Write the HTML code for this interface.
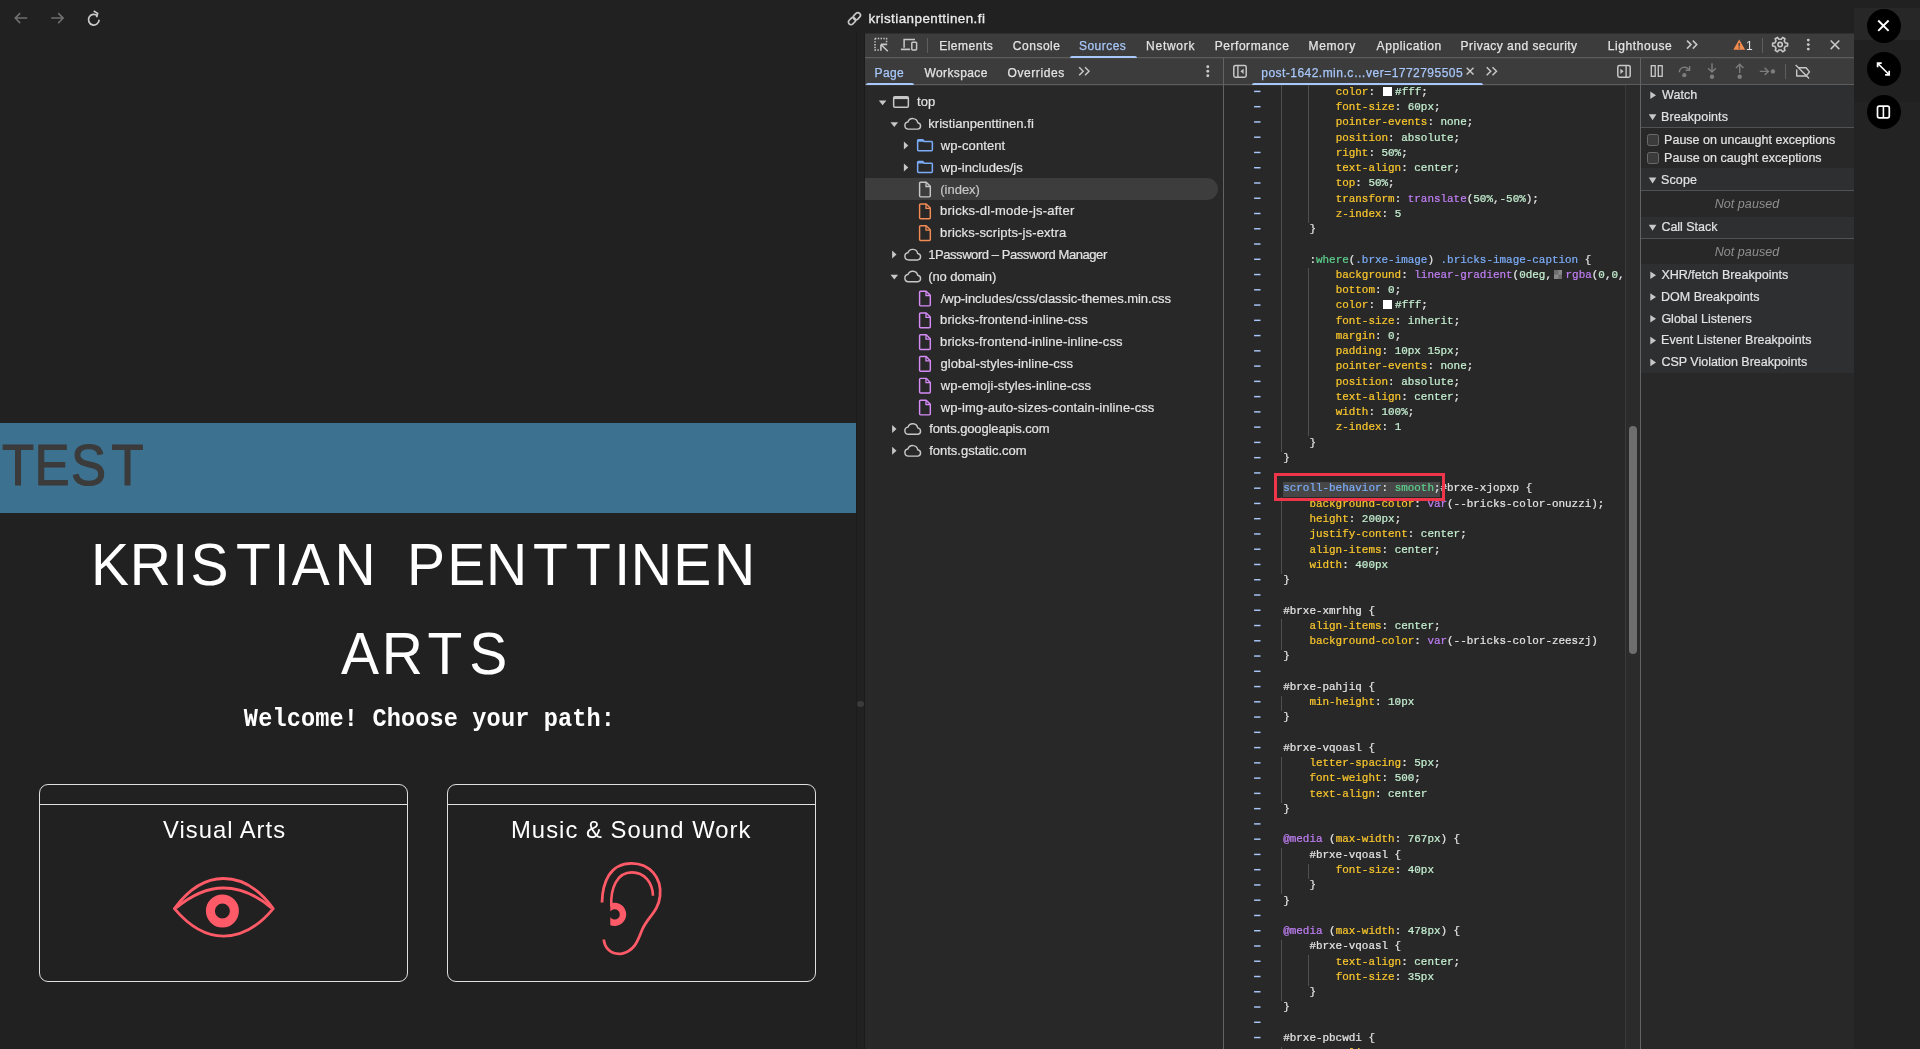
<!DOCTYPE html>
<html lang="en"><head><meta charset="utf-8"><title>kristianpenttinen.fi</title>
<style>
html,body{margin:0;padding:0}
body{width:1920px;height:1049px;overflow:hidden;background:#212121;position:relative;font-family:"Liberation Sans", sans-serif;color:#e3e3e3}
.a{position:absolute}
.t{position:absolute;white-space:pre;line-height:1}
.lyr{will-change:opacity}
.u{font-family:"Liberation Sans", sans-serif}
.m{font-family:"Liberation Mono", monospace}
.cl{position:absolute;left:1283.20px;height:15.26px;line-height:15.26px;font:10.93px/15.26px "Liberation Mono", monospace;white-space:pre;color:#e3e3e3;-webkit-text-stroke:0.22px currentColor}
.cl span{-webkit-text-stroke:0.22px currentColor}
.sw{display:inline-block;width:8.8px;height:8.8px;margin:0 3.1px 0 1.7px;vertical-align:-0.8px;box-sizing:border-box}
.chk{background:#6d6d6d;background-image:linear-gradient(45deg,#8a8a8a 25%,transparent 25%,transparent 75%,#8a8a8a 75%),linear-gradient(45deg,#8a8a8a 25%,transparent 25%,transparent 75%,#8a8a8a 75%);background-size:8.8px 8.8px;background-position:0 0,4.4px 4.4px}
.g{position:absolute;width:1px;background:#505050}
.hd{position:absolute;left:1641px;width:213px;background:#2e2f31}
.hb{position:absolute;left:1641px;width:213px;height:1px;background:#525252}
svg{position:absolute;overflow:visible}
</style></head><body>
<!-- browser chrome strip -->
<div class="a" style="left:856px;top:33px;width:9px;height:1016px;background:#212121;border-left:1px solid #1c1c1c;border-right:1px solid #1b1b1b;box-sizing:border-box"></div>
<div class="a" style="left:857.1px;top:700.7px;width:6.6px;height:6.6px;border-radius:50%;background:#3a3a3a"></div>
<div class="a" style="left:1854px;top:0;width:66px;height:1049px;background:#232323"></div>
<div class="a" style="left:1854px;top:0;width:66px;height:8px;background:#212121"></div>
<div class="a" style="left:1854px;top:8px;width:66px;height:32px;background:#272727"></div>
<div class="a" style="left:1854px;top:40px;width:66px;height:62px;background:#202020"></div>
<!-- page -->
<div class="a" style="left:0;top:423px;width:855.5px;height:89.7px;background:#3d7190"></div>
<div class="a" style="left:39.4px;top:783.7px;width:368.7px;height:198px;box-sizing:border-box;border:1.2px solid #e0e0e0;border-radius:9px"></div>
<div class="a" style="left:40.0px;top:804px;width:367.5px;height:1.2px;background:#e0e0e0"></div>
<div class="a" style="left:447.2px;top:783.7px;width:368.7px;height:198px;box-sizing:border-box;border:1.2px solid #e0e0e0;border-radius:9px"></div>
<div class="a" style="left:447.8px;top:804px;width:367.5px;height:1.2px;background:#e0e0e0"></div>
<!-- devtools -->
<div class="a" style="left:865px;top:34px;width:989px;height:1015px;background:#282828"></div>
<div class="a" style="left:865px;top:33px;width:989px;height:1px;background:#2f2f2f"></div>
<div class="a" style="left:865px;top:34px;width:989px;height:51px;background:#3c3c3c"></div>
<div class="a" style="left:865px;top:57px;width:989px;height:1px;background:#5c5c5c"></div>
<div class="a" style="left:865px;top:58px;width:989px;height:1px;background:#444"></div>
<div class="a" style="left:865px;top:84px;width:989px;height:1px;background:#5c5c5c"></div>
<div class="a" style="left:865px;top:85px;width:989px;height:1px;background:#343434"></div>
<div class="a" style="left:1223px;top:58px;width:1px;height:991px;background:#636363"></div>
<div class="a" style="left:1640px;top:58px;width:1px;height:991px;background:#636363"></div>
<div class="a" style="left:1070px;top:55.6px;width:66.6px;height:2.9px;background:#a8c7fa;border-radius:2.5px 2.5px 0 0"></div>
<div class="a" style="left:865.6px;top:82.7px;width:48.3px;height:2.7px;background:#a8c7fa;border-radius:2.5px 2.5px 0 0"></div>
<div class="a" style="left:1252px;top:82.7px;width:230.5px;height:2.7px;background:#a8c7fa;border-radius:2.5px 2.5px 0 0"></div>
<div class="a" style="left:927px;top:38px;width:1px;height:15px;background:#5e5e5e"></div>
<div class="a" style="left:1761.5px;top:38px;width:1px;height:15px;background:#5e5e5e"></div>
<div class="a" style="left:1785.4px;top:64px;width:1px;height:15px;background:#5e5e5e"></div>
<div class="a" style="left:865px;top:178.2px;width:353.4px;height:21.8px;background:#3d3d3d;border-radius:0 11px 11px 0"></div>
<div class="hd" style="top:85.0px;height:42.0px"></div>
<div class="hd" style="top:168.0px;height:22.0px"></div>
<div class="hd" style="top:217.0px;height:21.0px"></div>
<div class="hd" style="top:264.0px;height:109.0px"></div>
<div class="hb" style="top:127.0px"></div>
<div class="hb" style="top:190.0px"></div>
<div class="hb" style="top:238.0px"></div>
<div class="a" style="left:1646.8px;top:134.0px;width:12px;height:11.6px;box-sizing:border-box;border:1.2px solid #6a6a6a;border-radius:2.5px;background:#3b3b3b"></div>
<div class="a" style="left:1646.8px;top:152.0px;width:12px;height:11.6px;box-sizing:border-box;border:1.2px solid #6a6a6a;border-radius:2.5px;background:#3b3b3b"></div>
<div class="a" style="left:1625px;top:85.3px;width:15.2px;height:964px;background:#2b2b2b;border-left:1px solid #3a3a3a;box-sizing:border-box"></div>
<div class="a" style="left:1629px;top:425.8px;width:8px;height:228.4px;background:#6e6e6e;border-radius:4.2px"></div>
<!-- code -->
<div class="lyr">
<svg style="left:1254px;top:0" width="7" height="1049" viewBox="0 0 7 1049"><rect x="0.1" y="90.70" width="6.4" height="1.45" fill="#a8c7fa"/><rect x="0.1" y="105.96" width="6.4" height="1.45" fill="#a8c7fa"/><rect x="0.1" y="121.22" width="6.4" height="1.45" fill="#a8c7fa"/><rect x="0.1" y="136.48" width="6.4" height="1.45" fill="#a8c7fa"/><rect x="0.1" y="151.74" width="6.4" height="1.45" fill="#a8c7fa"/><rect x="0.1" y="167.00" width="6.4" height="1.45" fill="#a8c7fa"/><rect x="0.1" y="182.26" width="6.4" height="1.45" fill="#a8c7fa"/><rect x="0.1" y="197.52" width="6.4" height="1.45" fill="#a8c7fa"/><rect x="0.1" y="212.78" width="6.4" height="1.45" fill="#a8c7fa"/><rect x="0.1" y="228.04" width="6.4" height="1.45" fill="#a8c7fa"/><rect x="0.1" y="243.30" width="6.4" height="1.45" fill="#a8c7fa"/><rect x="0.1" y="258.56" width="6.4" height="1.45" fill="#a8c7fa"/><rect x="0.1" y="273.82" width="6.4" height="1.45" fill="#a8c7fa"/><rect x="0.1" y="289.08" width="6.4" height="1.45" fill="#a8c7fa"/><rect x="0.1" y="304.34" width="6.4" height="1.45" fill="#a8c7fa"/><rect x="0.1" y="319.60" width="6.4" height="1.45" fill="#a8c7fa"/><rect x="0.1" y="334.86" width="6.4" height="1.45" fill="#a8c7fa"/><rect x="0.1" y="350.12" width="6.4" height="1.45" fill="#a8c7fa"/><rect x="0.1" y="365.38" width="6.4" height="1.45" fill="#a8c7fa"/><rect x="0.1" y="380.64" width="6.4" height="1.45" fill="#a8c7fa"/><rect x="0.1" y="395.90" width="6.4" height="1.45" fill="#a8c7fa"/><rect x="0.1" y="411.16" width="6.4" height="1.45" fill="#a8c7fa"/><rect x="0.1" y="426.42" width="6.4" height="1.45" fill="#a8c7fa"/><rect x="0.1" y="441.68" width="6.4" height="1.45" fill="#a8c7fa"/><rect x="0.1" y="456.94" width="6.4" height="1.45" fill="#a8c7fa"/><rect x="0.1" y="472.20" width="6.4" height="1.45" fill="#a8c7fa"/><rect x="0.1" y="487.46" width="6.4" height="1.45" fill="#a8c7fa"/><rect x="0.1" y="502.72" width="6.4" height="1.45" fill="#a8c7fa"/><rect x="0.1" y="517.98" width="6.4" height="1.45" fill="#a8c7fa"/><rect x="0.1" y="533.24" width="6.4" height="1.45" fill="#a8c7fa"/><rect x="0.1" y="548.50" width="6.4" height="1.45" fill="#a8c7fa"/><rect x="0.1" y="563.76" width="6.4" height="1.45" fill="#a8c7fa"/><rect x="0.1" y="579.02" width="6.4" height="1.45" fill="#a8c7fa"/><rect x="0.1" y="594.28" width="6.4" height="1.45" fill="#a8c7fa"/><rect x="0.1" y="609.54" width="6.4" height="1.45" fill="#a8c7fa"/><rect x="0.1" y="624.80" width="6.4" height="1.45" fill="#a8c7fa"/><rect x="0.1" y="640.06" width="6.4" height="1.45" fill="#a8c7fa"/><rect x="0.1" y="655.32" width="6.4" height="1.45" fill="#a8c7fa"/><rect x="0.1" y="670.58" width="6.4" height="1.45" fill="#a8c7fa"/><rect x="0.1" y="685.84" width="6.4" height="1.45" fill="#a8c7fa"/><rect x="0.1" y="701.10" width="6.4" height="1.45" fill="#a8c7fa"/><rect x="0.1" y="716.36" width="6.4" height="1.45" fill="#a8c7fa"/><rect x="0.1" y="731.62" width="6.4" height="1.45" fill="#a8c7fa"/><rect x="0.1" y="746.88" width="6.4" height="1.45" fill="#a8c7fa"/><rect x="0.1" y="762.14" width="6.4" height="1.45" fill="#a8c7fa"/><rect x="0.1" y="777.40" width="6.4" height="1.45" fill="#a8c7fa"/><rect x="0.1" y="792.66" width="6.4" height="1.45" fill="#a8c7fa"/><rect x="0.1" y="807.92" width="6.4" height="1.45" fill="#a8c7fa"/><rect x="0.1" y="823.18" width="6.4" height="1.45" fill="#a8c7fa"/><rect x="0.1" y="838.44" width="6.4" height="1.45" fill="#a8c7fa"/><rect x="0.1" y="853.70" width="6.4" height="1.45" fill="#a8c7fa"/><rect x="0.1" y="868.96" width="6.4" height="1.45" fill="#a8c7fa"/><rect x="0.1" y="884.22" width="6.4" height="1.45" fill="#a8c7fa"/><rect x="0.1" y="899.48" width="6.4" height="1.45" fill="#a8c7fa"/><rect x="0.1" y="914.74" width="6.4" height="1.45" fill="#a8c7fa"/><rect x="0.1" y="930.00" width="6.4" height="1.45" fill="#a8c7fa"/><rect x="0.1" y="945.26" width="6.4" height="1.45" fill="#a8c7fa"/><rect x="0.1" y="960.52" width="6.4" height="1.45" fill="#a8c7fa"/><rect x="0.1" y="975.78" width="6.4" height="1.45" fill="#a8c7fa"/><rect x="0.1" y="991.04" width="6.4" height="1.45" fill="#a8c7fa"/><rect x="0.1" y="1006.30" width="6.4" height="1.45" fill="#a8c7fa"/><rect x="0.1" y="1021.56" width="6.4" height="1.45" fill="#a8c7fa"/><rect x="0.1" y="1036.82" width="6.4" height="1.45" fill="#a8c7fa"/><rect x="0.1" y="1052.08" width="6.4" height="1.45" fill="#a8c7fa"/></svg>
<div class="a" style="left:1282.6px;top:482.3px;width:157.3px;height:15px;background:#474747"></div>
<div class="g" style="left:1281.3px;top:85.33px;height:15.26px"></div><div class="g" style="left:1307.5px;top:85.33px;height:15.26px"></div><div class="cl" style="top:84.73px">        <span style="color:#f9c62c">color</span>: <i class="sw" style="background:#fff"></i><span style="color:#c4eed0">#fff</span>;</div>
<div class="g" style="left:1281.3px;top:100.59px;height:15.26px"></div><div class="g" style="left:1307.5px;top:100.59px;height:15.26px"></div><div class="cl" style="top:99.99px">        <span style="color:#f9c62c">font-size</span>: <span style="color:#c4eed0">60px</span>;</div>
<div class="g" style="left:1281.3px;top:115.85px;height:15.26px"></div><div class="g" style="left:1307.5px;top:115.85px;height:15.26px"></div><div class="cl" style="top:115.25px">        <span style="color:#f9c62c">pointer-events</span>: <span style="color:#c4eed0">none</span>;</div>
<div class="g" style="left:1281.3px;top:131.11px;height:15.26px"></div><div class="g" style="left:1307.5px;top:131.11px;height:15.26px"></div><div class="cl" style="top:130.51px">        <span style="color:#f9c62c">position</span>: <span style="color:#c4eed0">absolute</span>;</div>
<div class="g" style="left:1281.3px;top:146.37px;height:15.26px"></div><div class="g" style="left:1307.5px;top:146.37px;height:15.26px"></div><div class="cl" style="top:145.77px">        <span style="color:#f9c62c">right</span>: <span style="color:#c4eed0">50%</span>;</div>
<div class="g" style="left:1281.3px;top:161.63px;height:15.26px"></div><div class="g" style="left:1307.5px;top:161.63px;height:15.26px"></div><div class="cl" style="top:161.03px">        <span style="color:#f9c62c">text-align</span>: <span style="color:#c4eed0">center</span>;</div>
<div class="g" style="left:1281.3px;top:176.89px;height:15.26px"></div><div class="g" style="left:1307.5px;top:176.89px;height:15.26px"></div><div class="cl" style="top:176.29px">        <span style="color:#f9c62c">top</span>: <span style="color:#c4eed0">50%</span>;</div>
<div class="g" style="left:1281.3px;top:192.15px;height:15.26px"></div><div class="g" style="left:1307.5px;top:192.15px;height:15.26px"></div><div class="cl" style="top:191.55px">        <span style="color:#f9c62c">transform</span>: <span style="color:#c07ff5">translate</span>(<span style="color:#c4eed0">50%</span>,<span style="color:#c4eed0">-50%</span>);</div>
<div class="g" style="left:1281.3px;top:207.41px;height:15.26px"></div><div class="g" style="left:1307.5px;top:207.41px;height:15.26px"></div><div class="cl" style="top:206.81px">        <span style="color:#f9c62c">z-index</span>: <span style="color:#c4eed0">5</span></div>
<div class="g" style="left:1281.3px;top:222.67px;height:15.26px"></div><div class="cl" style="top:222.07px">    }</div>
<div class="g" style="left:1281.3px;top:237.93px;height:15.26px"></div>
<div class="g" style="left:1281.3px;top:253.19px;height:15.26px"></div><div class="cl" style="top:252.59px">    :<span style="color:#5cd08c">where</span>(<span style="color:#7cacf8">.brxe-image</span>) <span style="color:#7cacf8">.bricks-image-caption</span> {</div>
<div class="g" style="left:1281.3px;top:268.45px;height:15.26px"></div><div class="g" style="left:1307.5px;top:268.45px;height:15.26px"></div><div class="cl" style="top:267.85px">        <span style="color:#f9c62c">background</span>: <span style="color:#c07ff5">linear-gradient</span>(<span style="color:#c4eed0">0deg</span>,<i class="sw chk"></i><span style="color:#c07ff5">rgba</span>(<span style="color:#c4eed0">0</span>,<span style="color:#c4eed0">0</span>,</div>
<div class="g" style="left:1281.3px;top:283.71px;height:15.26px"></div><div class="g" style="left:1307.5px;top:283.71px;height:15.26px"></div><div class="cl" style="top:283.11px">        <span style="color:#f9c62c">bottom</span>: <span style="color:#c4eed0">0</span>;</div>
<div class="g" style="left:1281.3px;top:298.97px;height:15.26px"></div><div class="g" style="left:1307.5px;top:298.97px;height:15.26px"></div><div class="cl" style="top:298.37px">        <span style="color:#f9c62c">color</span>: <i class="sw" style="background:#fff"></i><span style="color:#c4eed0">#fff</span>;</div>
<div class="g" style="left:1281.3px;top:314.23px;height:15.26px"></div><div class="g" style="left:1307.5px;top:314.23px;height:15.26px"></div><div class="cl" style="top:313.63px">        <span style="color:#f9c62c">font-size</span>: <span style="color:#c4eed0">inherit</span>;</div>
<div class="g" style="left:1281.3px;top:329.49px;height:15.26px"></div><div class="g" style="left:1307.5px;top:329.49px;height:15.26px"></div><div class="cl" style="top:328.89px">        <span style="color:#f9c62c">margin</span>: <span style="color:#c4eed0">0</span>;</div>
<div class="g" style="left:1281.3px;top:344.75px;height:15.26px"></div><div class="g" style="left:1307.5px;top:344.75px;height:15.26px"></div><div class="cl" style="top:344.15px">        <span style="color:#f9c62c">padding</span>: <span style="color:#c4eed0">10px 15px</span>;</div>
<div class="g" style="left:1281.3px;top:360.01px;height:15.26px"></div><div class="g" style="left:1307.5px;top:360.01px;height:15.26px"></div><div class="cl" style="top:359.41px">        <span style="color:#f9c62c">pointer-events</span>: <span style="color:#c4eed0">none</span>;</div>
<div class="g" style="left:1281.3px;top:375.27px;height:15.26px"></div><div class="g" style="left:1307.5px;top:375.27px;height:15.26px"></div><div class="cl" style="top:374.67px">        <span style="color:#f9c62c">position</span>: <span style="color:#c4eed0">absolute</span>;</div>
<div class="g" style="left:1281.3px;top:390.53px;height:15.26px"></div><div class="g" style="left:1307.5px;top:390.53px;height:15.26px"></div><div class="cl" style="top:389.93px">        <span style="color:#f9c62c">text-align</span>: <span style="color:#c4eed0">center</span>;</div>
<div class="g" style="left:1281.3px;top:405.79px;height:15.26px"></div><div class="g" style="left:1307.5px;top:405.79px;height:15.26px"></div><div class="cl" style="top:405.19px">        <span style="color:#f9c62c">width</span>: <span style="color:#c4eed0">100%</span>;</div>
<div class="g" style="left:1281.3px;top:421.05px;height:15.26px"></div><div class="g" style="left:1307.5px;top:421.05px;height:15.26px"></div><div class="cl" style="top:420.45px">        <span style="color:#f9c62c">z-index</span>: <span style="color:#c4eed0">1</span></div>
<div class="g" style="left:1281.3px;top:436.31px;height:15.26px"></div><div class="cl" style="top:435.71px">    }</div>
<div class="cl" style="top:450.97px">}</div>

<div class="cl" style="top:481.49px"><span style="color:#7cacf8">scroll-behavior</span>: <span style="color:#5cd08c">smooth</span>;#brxe-xjopxp {</div>
<div class="g" style="left:1281.3px;top:497.35px;height:15.26px"></div><div class="cl" style="top:496.75px">    <span style="color:#f9c62c">background-color</span>: <span style="color:#c07ff5">var</span>(--bricks-color-onuzzi);</div>
<div class="g" style="left:1281.3px;top:512.61px;height:15.26px"></div><div class="cl" style="top:512.01px">    <span style="color:#f9c62c">height</span>: <span style="color:#c4eed0">200px</span>;</div>
<div class="g" style="left:1281.3px;top:527.87px;height:15.26px"></div><div class="cl" style="top:527.27px">    <span style="color:#f9c62c">justify-content</span>: <span style="color:#c4eed0">center</span>;</div>
<div class="g" style="left:1281.3px;top:543.13px;height:15.26px"></div><div class="cl" style="top:542.53px">    <span style="color:#f9c62c">align-items</span>: <span style="color:#c4eed0">center</span>;</div>
<div class="g" style="left:1281.3px;top:558.39px;height:15.26px"></div><div class="cl" style="top:557.79px">    <span style="color:#f9c62c">width</span>: <span style="color:#c4eed0">400px</span></div>
<div class="cl" style="top:573.05px">}</div>

<div class="cl" style="top:603.57px">#brxe-xmrhhg {</div>
<div class="g" style="left:1281.3px;top:619.43px;height:15.26px"></div><div class="cl" style="top:618.83px">    <span style="color:#f9c62c">align-items</span>: <span style="color:#c4eed0">center</span>;</div>
<div class="g" style="left:1281.3px;top:634.69px;height:15.26px"></div><div class="cl" style="top:634.09px">    <span style="color:#f9c62c">background-color</span>: <span style="color:#c07ff5">var</span>(--bricks-color-zeeszj)</div>
<div class="cl" style="top:649.35px">}</div>

<div class="cl" style="top:679.87px">#brxe-pahjiq {</div>
<div class="g" style="left:1281.3px;top:695.73px;height:15.26px"></div><div class="cl" style="top:695.13px">    <span style="color:#f9c62c">min-height</span>: <span style="color:#c4eed0">10px</span></div>
<div class="cl" style="top:710.39px">}</div>

<div class="cl" style="top:740.91px">#brxe-vqoasl {</div>
<div class="g" style="left:1281.3px;top:756.77px;height:15.26px"></div><div class="cl" style="top:756.17px">    <span style="color:#f9c62c">letter-spacing</span>: <span style="color:#c4eed0">5px</span>;</div>
<div class="g" style="left:1281.3px;top:772.03px;height:15.26px"></div><div class="cl" style="top:771.43px">    <span style="color:#f9c62c">font-weight</span>: <span style="color:#c4eed0">500</span>;</div>
<div class="g" style="left:1281.3px;top:787.29px;height:15.26px"></div><div class="cl" style="top:786.69px">    <span style="color:#f9c62c">text-align</span>: <span style="color:#c4eed0">center</span></div>
<div class="cl" style="top:801.95px">}</div>

<div class="cl" style="top:832.47px"><span style="color:#c07ff5">@media</span> (<span style="color:#f9c62c">max-width</span>: <span style="color:#c4eed0">767px</span>) {</div>
<div class="g" style="left:1281.3px;top:848.33px;height:15.26px"></div><div class="cl" style="top:847.73px">    #brxe-vqoasl {</div>
<div class="g" style="left:1281.3px;top:863.59px;height:15.26px"></div><div class="g" style="left:1307.5px;top:863.59px;height:15.26px"></div><div class="cl" style="top:862.99px">        <span style="color:#f9c62c">font-size</span>: <span style="color:#c4eed0">40px</span></div>
<div class="g" style="left:1281.3px;top:878.85px;height:15.26px"></div><div class="cl" style="top:878.25px">    }</div>
<div class="cl" style="top:893.51px">}</div>

<div class="cl" style="top:924.03px"><span style="color:#c07ff5">@media</span> (<span style="color:#f9c62c">max-width</span>: <span style="color:#c4eed0">478px</span>) {</div>
<div class="g" style="left:1281.3px;top:939.89px;height:15.26px"></div><div class="cl" style="top:939.29px">    #brxe-vqoasl {</div>
<div class="g" style="left:1281.3px;top:955.15px;height:15.26px"></div><div class="g" style="left:1307.5px;top:955.15px;height:15.26px"></div><div class="cl" style="top:954.55px">        <span style="color:#f9c62c">text-align</span>: <span style="color:#c4eed0">center</span>;</div>
<div class="g" style="left:1281.3px;top:970.41px;height:15.26px"></div><div class="g" style="left:1307.5px;top:970.41px;height:15.26px"></div><div class="cl" style="top:969.81px">        <span style="color:#f9c62c">font-size</span>: <span style="color:#c4eed0">35px</span></div>
<div class="g" style="left:1281.3px;top:985.67px;height:15.26px"></div><div class="cl" style="top:985.07px">    }</div>
<div class="cl" style="top:1000.33px">}</div>

<div class="cl" style="top:1030.85px">#brxe-pbcwdi {</div>
<div class="g" style="left:1281.3px;top:1046.71px;height:15.26px"></div><div class="cl" style="top:1046.11px">    <span style="color:#f9c62c">text-align</span>: <span style="color:#c4eed0">center</span>;</div>
</div>
<div class="a" style="left:1274px;top:472.9px;width:170.8px;height:27.9px;box-sizing:border-box;border:3px solid #ee3549"></div>
<!-- text -->
<div class="lyr">
<div id="t0" class="t u" style="left:868.51px;top:11.66px;font-size:13.40px;color:#ececec;letter-spacing:0.447px;-webkit-text-stroke:0.3px #ececec;">kristianpenttinen.fi</div>
<div id="t1" class="t u" style="left:939.14px;top:40.04px;font-size:12.00px;color:#e3e3e3;letter-spacing:0.512px;-webkit-text-stroke:0.25px currentColor;">Elements</div>
<div id="t2" class="t u" style="left:1012.86px;top:40.04px;font-size:12.00px;color:#e3e3e3;letter-spacing:0.512px;-webkit-text-stroke:0.25px currentColor;">Console</div>
<div id="t3" class="t u" style="left:1078.94px;top:40.04px;font-size:12.00px;color:#a8c7fa;letter-spacing:0.475px;-webkit-text-stroke:0.25px currentColor;">Sources</div>
<div id="t4" class="t u" style="left:1146.10px;top:40.04px;font-size:12.00px;color:#e3e3e3;letter-spacing:0.728px;-webkit-text-stroke:0.25px currentColor;">Network</div>
<div id="t5" class="t u" style="left:1214.77px;top:40.04px;font-size:12.00px;color:#e3e3e3;letter-spacing:0.534px;-webkit-text-stroke:0.25px currentColor;">Performance</div>
<div id="t6" class="t u" style="left:1308.54px;top:40.04px;font-size:12.00px;color:#e3e3e3;letter-spacing:0.692px;-webkit-text-stroke:0.25px currentColor;">Memory</div>
<div id="t7" class="t u" style="left:1376.57px;top:40.04px;font-size:12.00px;color:#e3e3e3;letter-spacing:0.593px;-webkit-text-stroke:0.25px currentColor;">Application</div>
<div id="t8" class="t u" style="left:1460.54px;top:40.04px;font-size:12.00px;color:#e3e3e3;letter-spacing:0.485px;-webkit-text-stroke:0.25px currentColor;">Privacy and security</div>
<div id="t9" class="t u" style="left:1607.73px;top:40.04px;font-size:12.00px;color:#e3e3e3;letter-spacing:0.589px;-webkit-text-stroke:0.25px currentColor;">Lighthouse</div>
<div id="t10" class="t u" style="left:1745.89px;top:40.04px;font-size:12.00px;color:#e3e3e3;">1</div>
<div id="t11" class="t u" style="left:874.54px;top:66.94px;font-size:12.00px;color:#a8c7fa;letter-spacing:0.340px;-webkit-text-stroke:0.25px currentColor;">Page</div>
<div id="t12" class="t u" style="left:924.55px;top:66.94px;font-size:12.00px;color:#e3e3e3;letter-spacing:0.380px;-webkit-text-stroke:0.25px currentColor;">Workspace</div>
<div id="t13" class="t u" style="left:1007.46px;top:66.94px;font-size:12.00px;color:#e3e3e3;letter-spacing:0.588px;-webkit-text-stroke:0.25px currentColor;">Overrides</div>
<div id="t14" class="t u" style="left:1261.26px;top:66.94px;font-size:12.00px;color:#a8c7fa;letter-spacing:0.468px;-webkit-text-stroke:0.25px currentColor;">post-1642.min.c…ver=1772795505</div>
<div id="t15" class="t u" style="left:917.08px;top:95.40px;font-size:13.00px;color:#e3e3e3;letter-spacing:0.082px;-webkit-text-stroke:0.2px currentColor;">top</div>
<div id="t16" class="t u" style="left:928.25px;top:117.20px;font-size:13.00px;color:#e3e3e3;letter-spacing:0.040px;-webkit-text-stroke:0.2px currentColor;">kristianpenttinen.fi</div>
<div id="t17" class="t u" style="left:940.77px;top:139.00px;font-size:13.00px;color:#e3e3e3;letter-spacing:0.094px;-webkit-text-stroke:0.2px currentColor;">wp-content</div>
<div id="t18" class="t u" style="left:940.77px;top:160.80px;font-size:13.00px;color:#e3e3e3;letter-spacing:0.024px;-webkit-text-stroke:0.2px currentColor;">wp-includes/js</div>
<div id="t19" class="t u" style="left:940.27px;top:182.60px;font-size:13.00px;color:#c6c6c6;letter-spacing:-0.012px;-webkit-text-stroke:0.2px currentColor;">(index)</div>
<div id="t20" class="t u" style="left:940.05px;top:204.40px;font-size:13.00px;color:#e3e3e3;letter-spacing:0.221px;-webkit-text-stroke:0.2px currentColor;">bricks-dl-mode-js-after</div>
<div id="t21" class="t u" style="left:940.05px;top:226.20px;font-size:13.00px;color:#e3e3e3;letter-spacing:0.156px;-webkit-text-stroke:0.2px currentColor;">bricks-scripts-js-extra</div>
<div id="t22" class="t u" style="left:928.18px;top:248.00px;font-size:13.00px;color:#e3e3e3;letter-spacing:-0.434px;-webkit-text-stroke:0.2px currentColor;">1Password – Password Manager</div>
<div id="t23" class="t u" style="left:928.34px;top:269.80px;font-size:13.00px;color:#e3e3e3;letter-spacing:-0.148px;-webkit-text-stroke:0.2px currentColor;">(no domain)</div>
<div id="t24" class="t u" style="left:940.81px;top:291.60px;font-size:13.00px;color:#e3e3e3;letter-spacing:-0.066px;-webkit-text-stroke:0.2px currentColor;">/wp-includes/css/classic-themes.min.css</div>
<div id="t25" class="t u" style="left:940.05px;top:313.40px;font-size:13.00px;color:#e3e3e3;letter-spacing:0.125px;-webkit-text-stroke:0.2px currentColor;">bricks-frontend-inline-css</div>
<div id="t26" class="t u" style="left:940.05px;top:335.20px;font-size:13.00px;color:#e3e3e3;letter-spacing:0.102px;-webkit-text-stroke:0.2px currentColor;">bricks-frontend-inline-inline-css</div>
<div id="t27" class="t u" style="left:940.39px;top:357.00px;font-size:13.00px;color:#e3e3e3;letter-spacing:0.079px;-webkit-text-stroke:0.2px currentColor;">global-styles-inline-css</div>
<div id="t28" class="t u" style="left:940.77px;top:378.80px;font-size:13.00px;color:#e3e3e3;letter-spacing:0.085px;-webkit-text-stroke:0.2px currentColor;">wp-emoji-styles-inline-css</div>
<div id="t29" class="t u" style="left:940.77px;top:400.60px;font-size:13.00px;color:#e3e3e3;letter-spacing:0.096px;-webkit-text-stroke:0.2px currentColor;">wp-img-auto-sizes-contain-inline-css</div>
<div id="t30" class="t u" style="left:929.18px;top:422.40px;font-size:13.00px;color:#e3e3e3;letter-spacing:-0.134px;-webkit-text-stroke:0.2px currentColor;">fonts.googleapis.com</div>
<div id="t31" class="t u" style="left:929.18px;top:444.20px;font-size:13.00px;color:#e3e3e3;letter-spacing:-0.007px;-webkit-text-stroke:0.2px currentColor;">fonts.gstatic.com</div>
<div id="t32" class="t u" style="left:1662.10px;top:89.02px;font-size:12.50px;color:#e3e3e3;letter-spacing:0.027px;-webkit-text-stroke:0.2px currentColor;">Watch</div>
<div id="t33" class="t u" style="left:1661.03px;top:111.32px;font-size:12.50px;color:#e3e3e3;letter-spacing:0.090px;-webkit-text-stroke:0.2px currentColor;">Breakpoints</div>
<div id="t34" class="t u" style="left:1664.09px;top:134.12px;font-size:12.50px;color:#e3e3e3;letter-spacing:0.011px;-webkit-text-stroke:0.2px currentColor;">Pause on uncaught exceptions</div>
<div id="t35" class="t u" style="left:1664.09px;top:152.32px;font-size:12.50px;color:#e3e3e3;letter-spacing:0.019px;-webkit-text-stroke:0.2px currentColor;">Pause on caught exceptions</div>
<div id="t36" class="t u" style="left:1661.06px;top:174.42px;font-size:12.50px;color:#e3e3e3;letter-spacing:0.100px;-webkit-text-stroke:0.2px currentColor;">Scope</div>
<div id="t37" class="t u" style="left:1661.45px;top:220.82px;font-size:12.50px;color:#e3e3e3;letter-spacing:-0.027px;-webkit-text-stroke:0.2px currentColor;">Call Stack</div>
<div id="t38" class="t u" style="left:1661.42px;top:269.42px;font-size:12.50px;color:#e3e3e3;letter-spacing:0.016px;-webkit-text-stroke:0.2px currentColor;">XHR/fetch Breakpoints</div>
<div id="t39" class="t u" style="left:1661.09px;top:291.32px;font-size:12.50px;color:#e3e3e3;letter-spacing:-0.018px;-webkit-text-stroke:0.2px currentColor;">DOM Breakpoints</div>
<div id="t40" class="t u" style="left:1661.39px;top:313.12px;font-size:12.50px;color:#e3e3e3;-webkit-text-stroke:0.2px currentColor;">Global Listeners</div>
<div id="t41" class="t u" style="left:1661.09px;top:333.92px;font-size:12.50px;color:#e3e3e3;letter-spacing:0.038px;-webkit-text-stroke:0.2px currentColor;">Event Listener Breakpoints</div>
<div id="t42" class="t u" style="left:1661.48px;top:355.72px;font-size:12.50px;color:#e3e3e3;letter-spacing:-0.018px;-webkit-text-stroke:0.2px currentColor;">CSP Violation Breakpoints</div>
<div id="t43" class="t u" style="left:1714.70px;top:198.42px;font-size:12.50px;color:#8f8f8f;font-style:italic;letter-spacing:0.062px;">Not paused</div>
<div id="t44" class="t u" style="left:1714.70px;top:246.02px;font-size:12.50px;color:#8f8f8f;font-style:italic;letter-spacing:0.062px;">Not paused</div>
<div id="t45" class="t u" style="left:2.36px;top:437.87px;font-size:56.50px;color:#3b3b3b;font-kerning:none;transform:scaleX(0.930);transform-origin:0 0;-webkit-text-stroke:1.2px #3b3b3b;"><span style="letter-spacing:0.50px">T</span><span style="letter-spacing:1.54px">E</span><span style="letter-spacing:5.70px">S</span>T</div>
<div id="t46" class="t u" style="left:90.86px;top:534.51px;font-size:60.00px;color:#ffffff;font-kerning:none;transform:scaleX(0.950);transform-origin:0 0;"><span style="letter-spacing:0.80px">K</span><span style="letter-spacing:1.31px">R</span><span style="letter-spacing:2.66px">I</span><span style="letter-spacing:7.77px">S</span><span style="letter-spacing:3.22px">T</span><span style="letter-spacing:2.02px">I</span><span style="letter-spacing:5.07px">A</span>N</div>
<div id="t47" class="t u" style="left:406.97px;top:534.51px;font-size:60.00px;color:#ffffff;font-kerning:none;transform:scaleX(0.950);transform-origin:0 0;"><span style="letter-spacing:2.43px">P</span><span style="letter-spacing:0.73px">E</span><span style="letter-spacing:6.20px">N</span><span style="letter-spacing:8.50px">T</span><span style="letter-spacing:3.48px">T</span><span style="letter-spacing:0.86px">I</span><span style="letter-spacing:1.37px">N</span><span style="letter-spacing:2.89px">E</span>N</div>
<div id="t48" class="t u" style="left:341.44px;top:623.51px;font-size:60.00px;color:#ffffff;font-kerning:none;transform:scaleX(0.950);transform-origin:0 0;"><span style="letter-spacing:2.93px">A</span><span style="letter-spacing:4.70px">R</span><span style="letter-spacing:7.29px">T</span>S</div>
<div id="t49" class="t m" style="left:243.86px;top:708.11px;font-size:23.60px;color:#ffffff;font-weight:700;letter-spacing:0.121px;transform:scaleY(1.13);transform-origin:0 78.3%;">Welcome! Choose your path:</div>
<div id="t50" class="t u" style="left:163.03px;top:818.35px;font-size:23.80px;color:#ffffff;letter-spacing:1.004px;">Visual Arts</div>
<div id="t51" class="t u" style="left:511.01px;top:818.35px;font-size:23.80px;color:#ffffff;letter-spacing:1.037px;">Music &amp; Sound Work</div>
</div>
<!-- icons -->
<svg style="left:14px;top:11px" width="14" height="15" viewBox="0 0 14 15"><g transform="translate(0.00 0.60)"><path d="M13.2 6.5H1.3M6.2 1.5L1.2 6.5l5 5" fill="none" stroke="#6f6f6f" stroke-width="1.5"/></g></svg>
<svg style="left:51px;top:11px" width="14" height="15" viewBox="0 0 14 15"><g transform="translate(0.00 0.60)"><path d="M0.2 6.5h11.9M7.2 1.5l5 5-5 5" fill="none" stroke="#6f6f6f" stroke-width="1.5"/></g></svg>
<svg style="left:87px;top:10px" width="14" height="16" viewBox="0 0 14 16"><g transform="translate(0.50 0.50)"><path d="M9.9 5.3A5.3 5.3 0 1 0 11.6 9.2" fill="none" stroke="#c9c9c9" stroke-width="1.75"/><path d="M6.2 0.6l3.9 2.2-1 4" fill="none" stroke="#c9c9c9" stroke-width="1.7"/></g></svg>
<svg style="left:847px;top:11px" width="15" height="16" viewBox="0 0 15 16"><g transform="translate(0.40 0.70)"><g transform="rotate(-45 7 7)" fill="none" stroke="#c6c6c6" stroke-width="1.7"><rect x="-0.4" y="4.4" width="7.9" height="5.2" rx="2.6"/><rect x="6.5" y="4.4" width="7.9" height="5.2" rx="2.6"/></g></g></svg>
<svg style="left:874px;top:37px" width="16" height="15" viewBox="0 0 16 15"><g transform="translate(0.00 0.50)"><path d="M1 0.9h11.6v5.2M1 0.9v11.6h4.4" fill="none" stroke="#c7c7c7" stroke-width="1.5" stroke-dasharray="1.4 1.4"/><path d="M6.9 6.9h6.3M6.9 6.9v6.3M7.2 7.2l6.6 6.6" fill="none" stroke="#c7c7c7" stroke-width="1.6"/><path d="M6.2 6.2h7.2l-7.2 7.2z" fill="#c7c7c7" opacity=".0"/></g></svg>
<svg style="left:900px;top:38px" width="18" height="14" viewBox="0 0 18 14"><g transform="translate(0.90 0.50)"><path d="M3.2 9.2V1h10.9" fill="none" stroke="#c7c7c7" stroke-width="1.5"/><path d="M0 10.9h9.2" stroke="#c7c7c7" stroke-width="1.7"/><rect x="10.9" y="3.8" width="4.8" height="7.6" rx="0.8" fill="none" stroke="#c7c7c7" stroke-width="1.5"/></g></svg>
<svg style="left:1686px;top:40px" width="13" height="10" viewBox="0 0 13 10"><g transform="translate(0.30 0.00)"><path d="M0.7 0.6l4 4-4 4M6.5 0.6l4 4-4 4" fill="none" stroke="#c7c7c7" stroke-width="1.5"/></g></svg>
<svg style="left:1078px;top:66px" width="13" height="11" viewBox="0 0 13 11"><g transform="translate(0.50 0.70)"><path d="M0.7 0.6l4 4-4 4M6.5 0.6l4 4-4 4" fill="none" stroke="#c7c7c7" stroke-width="1.5"/></g></svg>
<svg style="left:1486px;top:66px" width="13" height="11" viewBox="0 0 13 11"><g transform="translate(0.00 0.70)"><path d="M0.7 0.6l4 4-4 4M6.5 0.6l4 4-4 4" fill="none" stroke="#c7c7c7" stroke-width="1.5"/></g></svg>
<svg style="left:1733px;top:39px" width="13" height="12" viewBox="0 0 13 12"><g transform="translate(0.00 0.20)"><path d="M6.2 0.4L12.1 10.5H0.3z" fill="#f28b4d"/><path d="M6.2 3.9v3.4" stroke="#3c3c3c" stroke-width="1.3"/><circle cx="6.2" cy="8.8" r="0.75" fill="#3c3c3c"/></g></svg>
<svg style="left:1772px;top:36px" width="17" height="18" viewBox="0 0 17 18"><g transform="translate(0.10 0.60)"><path d="M15.48 6.65L15.48 9.35L13.23 9.70L12.09 11.68L12.91 13.80L10.57 15.15L9.14 13.38L6.86 13.38L5.43 15.15L3.09 13.80L3.91 11.68L2.77 9.70L0.52 9.35L0.52 6.65L2.77 6.30L3.91 4.32L3.09 2.20L5.43 0.85L6.86 2.62L9.14 2.62L10.57 0.85L12.91 2.20L12.09 4.32L13.23 6.30z" fill="none" stroke="#c7c7c7" stroke-width="1.6" stroke-linejoin="round"/><circle cx="8" cy="8" r="2.2" fill="none" stroke="#c7c7c7" stroke-width="1.6"/></g></svg>
<svg style="left:1806px;top:38px" width="5" height="14" viewBox="0 0 5 14"><g transform="translate(0.80 0.60)"><circle cx="1.5" cy="1.5" r="1.45" fill="#c7c7c7"/><circle cx="1.5" cy="6" r="1.45" fill="#c7c7c7"/><circle cx="1.5" cy="10.5" r="1.45" fill="#c7c7c7"/></g></svg>
<svg style="left:1206px;top:65px" width="4" height="13" viewBox="0 0 4 13"><g transform="translate(0.30 0.20)"><circle cx="1.5" cy="1.5" r="1.45" fill="#c7c7c7"/><circle cx="1.5" cy="6" r="1.45" fill="#c7c7c7"/><circle cx="1.5" cy="10.5" r="1.45" fill="#c7c7c7"/></g></svg>
<svg style="left:1830px;top:40px" width="11" height="11" viewBox="0 0 11 11"><g transform="translate(0.20 0.00)"><path d="M0.5 0.5L9.1 9.1M9.1 0.5L0.5 9.1" stroke="#c7c7c7" stroke-width="1.6"/></g></svg>
<svg style="left:1466px;top:67px" width="9" height="9" viewBox="0 0 9 9"><g transform="translate(0.20 0.30)"><path d="M0.5 0.5L7.3 7.3M7.3 0.5L0.5 7.3" stroke="#c7c7c7" stroke-width="1.45"/></g></svg>
<svg style="left:1233px;top:64px" width="15" height="15" viewBox="0 0 15 15"><g transform="translate(0.00 0.60)"><rect x="0.8" y="0.8" width="12.4" height="11.8" rx="1.6" fill="none" stroke="#c7c7c7" stroke-width="1.5"/><path d="M4.9 0.8v11.8" stroke="#c7c7c7" stroke-width="1.4"/><path d="M10.6 4.1v5.2L7.4 6.7z" fill="#c7c7c7"/></g></svg>
<svg style="left:1617px;top:64px" width="15" height="15" viewBox="0 0 15 15"><g transform="translate(0.00 0.60)"><rect x="0.8" y="0.8" width="12.4" height="11.8" rx="1.6" fill="none" stroke="#c7c7c7" stroke-width="1.5"/><path d="M9.1 0.8v11.8" stroke="#c7c7c7" stroke-width="1.4"/><path d="M3.4 4.1v5.2l3.2-2.6z" fill="#c7c7c7"/></g></svg>
<svg style="left:1650px;top:65px" width="14" height="13" viewBox="0 0 14 13"><g transform="translate(0.60 0.00)"><rect x="0.7" y="0.7" width="3.9" height="10.6" fill="none" stroke="#c7c7c7" stroke-width="1.35"/><rect x="7.7" y="0.7" width="3.9" height="10.6" fill="none" stroke="#c7c7c7" stroke-width="1.35"/></g></svg>
<svg style="left:1678px;top:64px" width="14" height="15" viewBox="0 0 14 15"><g transform="translate(0.00 0.00)"><path d="M1.3 8.2A5.3 5.3 0 0 1 11 5.6" fill="none" stroke="#7d7d7d" stroke-width="1.4"/><path d="M11.6 2v4.2H7.6" fill="none" stroke="#7d7d7d" stroke-width="1.4"/><circle cx="6.3" cy="11.2" r="2.1" fill="#7d7d7d"/></g></svg>
<svg style="left:1706px;top:62px" width="13" height="18" viewBox="0 0 13 18"><g transform="translate(0.00 0.50)"><path d="M6 0.8v8.6M2.2 5.8L6 9.6l3.8-3.8" fill="none" stroke="#7d7d7d" stroke-width="1.4"/><circle cx="6" cy="14.3" r="2.2" fill="#7d7d7d"/></g></svg>
<svg style="left:1733px;top:62px" width="14" height="18" viewBox="0 0 14 18"><g transform="translate(0.70 0.50)"><path d="M6 10.4V1.9M2.2 5.6L6 1.8l3.8 3.8" fill="none" stroke="#7d7d7d" stroke-width="1.4"/><circle cx="6" cy="14.3" r="2.2" fill="#7d7d7d"/></g></svg>
<svg style="left:1759px;top:66px" width="18" height="11" viewBox="0 0 18 11"><g transform="translate(0.50 0.50)"><path d="M0.3 4.9h8.3M5.1 1.2l3.8 3.7-3.8 3.7" fill="none" stroke="#7d7d7d" stroke-width="1.4"/><circle cx="13.4" cy="4.9" r="2.2" fill="#7d7d7d"/></g></svg>
<svg style="left:1794px;top:64px" width="18" height="16" viewBox="0 0 18 16"><g transform="translate(0.50 0.50)"><path d="M4.3 3.2H11.6L15 7.4l-3.4 4.1H2.2V5" fill="none" stroke="#c7c7c7" stroke-width="1.4" stroke-linejoin="round"/><path d="M1.2 0.6L14.6 13.9" stroke="#c7c7c7" stroke-width="1.4"/></g></svg>
<svg style="left:878px;top:100px" width="9" height="6" viewBox="0 0 9 6"><g transform="translate(0.80 0.40)"><path d="M0 0h7.6L3.8 4.8z" fill="#c7c7c7"/></g></svg>
<svg style="left:892px;top:95px" width="18" height="14" viewBox="0 0 18 14"><g transform="translate(0.90 0.90)"><rect x="0.75" y="0.75" width="14.7" height="10.7" rx="1.3" fill="none" stroke="#c7c7c7" stroke-width="1.5"/><path d="M0.8 2h14.6" stroke="#c7c7c7" stroke-width="2.4"/></g></svg>
<svg style="left:890px;top:122px" width="9" height="6" viewBox="0 0 9 6"><g transform="translate(0.50 0.20)"><path d="M0 0h7.6L3.8 4.8z" fill="#c7c7c7"/></g></svg>
<svg style="left:903px;top:117px" width="20" height="14" viewBox="0 0 20 14"><g transform="translate(0.80 0.70)"><path d="M4.6 11.4a3.6 3.6 0 0 1-.5-7.15A5.1 5.1 0 0 1 13.9 5a3.25 3.25 0 0 1 .3 6.4z" fill="none" stroke="#c7c7c7" stroke-width="1.45" stroke-linejoin="round"/></g></svg>
<svg style="left:903px;top:141px" width="6" height="10" viewBox="0 0 6 10"><g transform="translate(0.90 0.60)"><path d="M0 0v8L4.4 4z" fill="#c7c7c7"/></g></svg>
<svg style="left:916px;top:139px" width="18" height="13" viewBox="0 0 18 13"><g transform="translate(0.90 0.00)"><path d="M0.75 1.6a.9.9 0 0 1 .9-.9h4.2l1.5 1.7h7.2a.9.9 0 0 1 .9.9v7.5a.9.9 0 0 1-.9.9H1.65a.9.9 0 0 1-.9-.9z" fill="none" stroke="#7cacf8" stroke-width="1.5"/><path d="M0.75 0.8h5.3l1.5 1.9H0.75z" fill="#7cacf8"/></g></svg>
<svg style="left:903px;top:163px" width="6" height="9" viewBox="0 0 6 9"><g transform="translate(0.90 0.40)"><path d="M0 0v8L4.4 4z" fill="#c7c7c7"/></g></svg>
<svg style="left:916px;top:160px" width="18" height="14" viewBox="0 0 18 14"><g transform="translate(0.90 0.80)"><path d="M0.75 1.6a.9.9 0 0 1 .9-.9h4.2l1.5 1.7h7.2a.9.9 0 0 1 .9.9v7.5a.9.9 0 0 1-.9.9H1.65a.9.9 0 0 1-.9-.9z" fill="none" stroke="#7cacf8" stroke-width="1.5"/><path d="M0.75 0.8h5.3l1.5 1.9H0.75z" fill="#7cacf8"/></g></svg>
<svg style="left:918px;top:181px" width="14" height="18" viewBox="0 0 14 18"><g transform="translate(0.70 0.40)"><path d="M1.9.75h5.6l4.1 4.1v9.6a1 1 0 0 1-1 1H1.9a1 1 0 0 1-1-1V1.75a1 1 0 0 1 1-1z" fill="none" stroke="#c7c7c7" stroke-width="1.45" stroke-linejoin="round"/><path d="M7.3.9v4.2h4.2" fill="none" stroke="#c7c7c7" stroke-width="1.3"/></g></svg>
<svg style="left:918px;top:203px" width="14" height="17" viewBox="0 0 14 17"><g transform="translate(0.70 0.20)"><path d="M1.9.75h5.6l4.1 4.1v9.6a1 1 0 0 1-1 1H1.9a1 1 0 0 1-1-1V1.75a1 1 0 0 1 1-1z" fill="none" stroke="#f28b54" stroke-width="1.45" stroke-linejoin="round"/><path d="M7.3.9v4.2h4.2" fill="none" stroke="#f28b54" stroke-width="1.3"/></g></svg>
<svg style="left:918px;top:225px" width="14" height="17" viewBox="0 0 14 17"><g transform="translate(0.70 0.00)"><path d="M1.9.75h5.6l4.1 4.1v9.6a1 1 0 0 1-1 1H1.9a1 1 0 0 1-1-1V1.75a1 1 0 0 1 1-1z" fill="none" stroke="#f28b54" stroke-width="1.45" stroke-linejoin="round"/><path d="M7.3.9v4.2h4.2" fill="none" stroke="#f28b54" stroke-width="1.3"/></g></svg>
<svg style="left:892px;top:250px" width="6" height="10" viewBox="0 0 6 10"><g transform="translate(0.10 0.60)"><path d="M0 0v8L4.4 4z" fill="#c7c7c7"/></g></svg>
<svg style="left:903px;top:248px" width="20" height="14" viewBox="0 0 20 14"><g transform="translate(0.80 0.50)"><path d="M4.6 11.4a3.6 3.6 0 0 1-.5-7.15A5.1 5.1 0 0 1 13.9 5a3.25 3.25 0 0 1 .3 6.4z" fill="none" stroke="#c7c7c7" stroke-width="1.45" stroke-linejoin="round"/></g></svg>
<svg style="left:890px;top:274px" width="9" height="7" viewBox="0 0 9 7"><g transform="translate(0.50 0.80)"><path d="M0 0h7.6L3.8 4.8z" fill="#c7c7c7"/></g></svg>
<svg style="left:903px;top:270px" width="20" height="14" viewBox="0 0 20 14"><g transform="translate(0.80 0.30)"><path d="M4.6 11.4a3.6 3.6 0 0 1-.5-7.15A5.1 5.1 0 0 1 13.9 5a3.25 3.25 0 0 1 .3 6.4z" fill="none" stroke="#c7c7c7" stroke-width="1.45" stroke-linejoin="round"/></g></svg>
<svg style="left:918px;top:290px" width="14" height="18" viewBox="0 0 14 18"><g transform="translate(0.70 0.40)"><path d="M1.9.75h5.6l4.1 4.1v9.6a1 1 0 0 1-1 1H1.9a1 1 0 0 1-1-1V1.75a1 1 0 0 1 1-1z" fill="none" stroke="#d58bf5" stroke-width="1.45" stroke-linejoin="round"/><path d="M7.3.9v4.2h4.2" fill="none" stroke="#d58bf5" stroke-width="1.3"/></g></svg>
<svg style="left:918px;top:312px" width="14" height="17" viewBox="0 0 14 17"><g transform="translate(0.70 0.20)"><path d="M1.9.75h5.6l4.1 4.1v9.6a1 1 0 0 1-1 1H1.9a1 1 0 0 1-1-1V1.75a1 1 0 0 1 1-1z" fill="none" stroke="#d58bf5" stroke-width="1.45" stroke-linejoin="round"/><path d="M7.3.9v4.2h4.2" fill="none" stroke="#d58bf5" stroke-width="1.3"/></g></svg>
<svg style="left:918px;top:334px" width="14" height="17" viewBox="0 0 14 17"><g transform="translate(0.70 0.00)"><path d="M1.9.75h5.6l4.1 4.1v9.6a1 1 0 0 1-1 1H1.9a1 1 0 0 1-1-1V1.75a1 1 0 0 1 1-1z" fill="none" stroke="#d58bf5" stroke-width="1.45" stroke-linejoin="round"/><path d="M7.3.9v4.2h4.2" fill="none" stroke="#d58bf5" stroke-width="1.3"/></g></svg>
<svg style="left:918px;top:355px" width="14" height="18" viewBox="0 0 14 18"><g transform="translate(0.70 0.80)"><path d="M1.9.75h5.6l4.1 4.1v9.6a1 1 0 0 1-1 1H1.9a1 1 0 0 1-1-1V1.75a1 1 0 0 1 1-1z" fill="none" stroke="#d58bf5" stroke-width="1.45" stroke-linejoin="round"/><path d="M7.3.9v4.2h4.2" fill="none" stroke="#d58bf5" stroke-width="1.3"/></g></svg>
<svg style="left:918px;top:377px" width="14" height="18" viewBox="0 0 14 18"><g transform="translate(0.70 0.60)"><path d="M1.9.75h5.6l4.1 4.1v9.6a1 1 0 0 1-1 1H1.9a1 1 0 0 1-1-1V1.75a1 1 0 0 1 1-1z" fill="none" stroke="#d58bf5" stroke-width="1.45" stroke-linejoin="round"/><path d="M7.3.9v4.2h4.2" fill="none" stroke="#d58bf5" stroke-width="1.3"/></g></svg>
<svg style="left:918px;top:399px" width="14" height="18" viewBox="0 0 14 18"><g transform="translate(0.70 0.40)"><path d="M1.9.75h5.6l4.1 4.1v9.6a1 1 0 0 1-1 1H1.9a1 1 0 0 1-1-1V1.75a1 1 0 0 1 1-1z" fill="none" stroke="#d58bf5" stroke-width="1.45" stroke-linejoin="round"/><path d="M7.3.9v4.2h4.2" fill="none" stroke="#d58bf5" stroke-width="1.3"/></g></svg>
<svg style="left:892px;top:425px" width="6" height="9" viewBox="0 0 6 9"><g transform="translate(0.10 0.00)"><path d="M0 0v8L4.4 4z" fill="#c7c7c7"/></g></svg>
<svg style="left:903px;top:422px" width="20" height="14" viewBox="0 0 20 14"><g transform="translate(0.80 0.90)"><path d="M4.6 11.4a3.6 3.6 0 0 1-.5-7.15A5.1 5.1 0 0 1 13.9 5a3.25 3.25 0 0 1 .3 6.4z" fill="none" stroke="#c7c7c7" stroke-width="1.45" stroke-linejoin="round"/></g></svg>
<svg style="left:892px;top:446px" width="6" height="10" viewBox="0 0 6 10"><g transform="translate(0.10 0.80)"><path d="M0 0v8L4.4 4z" fill="#c7c7c7"/></g></svg>
<svg style="left:903px;top:444px" width="20" height="14" viewBox="0 0 20 14"><g transform="translate(0.80 0.70)"><path d="M4.6 11.4a3.6 3.6 0 0 1-.5-7.15A5.1 5.1 0 0 1 13.9 5a3.25 3.25 0 0 1 .3 6.4z" fill="none" stroke="#c7c7c7" stroke-width="1.45" stroke-linejoin="round"/></g></svg>
<svg style="left:1650px;top:91px" width="7" height="9" viewBox="0 0 7 9"><g transform="translate(0.30 0.40)"><path d="M0 0v7.6L5.7 3.8z" fill="#c7c7c7"/></g></svg>
<svg style="left:1648px;top:114px" width="9" height="7" viewBox="0 0 9 7"><g transform="translate(0.80 0.20)"><path d="M0 0h7.6L3.8 6z" fill="#c7c7c7"/></g></svg>
<svg style="left:1648px;top:177px" width="9" height="7" viewBox="0 0 9 7"><g transform="translate(0.80 0.40)"><path d="M0 0h7.6L3.8 6z" fill="#c7c7c7"/></g></svg>
<svg style="left:1648px;top:224px" width="9" height="8" viewBox="0 0 9 8"><g transform="translate(0.80 0.80)"><path d="M0 0h7.6L3.8 6z" fill="#c7c7c7"/></g></svg>
<svg style="left:1650px;top:271px" width="7" height="9" viewBox="0 0 7 9"><g transform="translate(0.30 0.40)"><path d="M0 0v7.6L5.7 3.8z" fill="#c7c7c7"/></g></svg>
<svg style="left:1650px;top:293px" width="7" height="9" viewBox="0 0 7 9"><g transform="translate(0.30 0.20)"><path d="M0 0v7.6L5.7 3.8z" fill="#c7c7c7"/></g></svg>
<svg style="left:1650px;top:315px" width="7" height="9" viewBox="0 0 7 9"><g transform="translate(0.30 0.00)"><path d="M0 0v7.6L5.7 3.8z" fill="#c7c7c7"/></g></svg>
<svg style="left:1650px;top:336px" width="7" height="9" viewBox="0 0 7 9"><g transform="translate(0.30 0.80)"><path d="M0 0v7.6L5.7 3.8z" fill="#c7c7c7"/></g></svg>
<svg style="left:1650px;top:358px" width="7" height="9" viewBox="0 0 7 9"><g transform="translate(0.30 0.60)"><path d="M0 0v7.6L5.7 3.8z" fill="#c7c7c7"/></g></svg>
<div class="a" style="left:1866.5px;top:8.7px;width:34px;height:34px;border-radius:50%;background:#000"></div>
<div class="a" style="left:1866.5px;top:52.0px;width:34px;height:34px;border-radius:50%;background:#000"></div>
<div class="a" style="left:1866.5px;top:95.0px;width:34px;height:34px;border-radius:50%;background:#000"></div>
<svg style="left:1877px;top:19px" width="13" height="14" viewBox="0 0 13 14"><g transform="translate(0.40 0.70)"><path d="M0.8 0.8l10.4 10.4M11.2 0.8L0.8 11.2" stroke="#fff" stroke-width="1.9"/></g></svg>
<svg style="left:1876px;top:62px" width="15" height="15" viewBox="0 0 15 15"><g transform="translate(0.40 0.00)"><path d="M1.2 5.3V1.2h4.1M1.5 1.5l11 11M12.8 8.7v4.1H8.7" fill="none" stroke="#fff" stroke-width="1.7"/></g></svg>
<svg style="left:1876px;top:105px" width="15" height="15" viewBox="0 0 15 15"><g transform="translate(0.60 0.30)"><rect x="0.9" y="0.9" width="11.8" height="11.6" rx="1.8" fill="none" stroke="#fff" stroke-width="1.7"/><path d="M6.8 0.9v11.6" stroke="#fff" stroke-width="1.6"/></g></svg>
<svg style="left:170px;top:872px" width="109" height="71" viewBox="0 0 109 71"><g transform="translate(0.00 0.00)"><path d="M4.4 36.6C22 12.6 40 6.5 53.5 6.5S86 12.6 103.2 36.6C86 57.4 68 64.1 53.5 64.1S22 57.4 4.4 36.6z" fill="none" stroke="#ff5a67" stroke-width="2.8" stroke-linejoin="round"/><path d="M6 36C24 21 40 16 53.5 16S84 21 101.5 36" fill="none" stroke="#ff5a67" stroke-width="2.9"/><circle cx="52.4" cy="39" r="12" fill="none" stroke="#ff5a67" stroke-width="9"/></g></svg>
<svg style="left:598px;top:860px" width="69" height="99" viewBox="0 0 69 99"><g transform="translate(0.00 0.00)"><path d="M4 42.5C4.5 22 12 3.3 33.5 3.3C52 3.3 64 18 62 36C60.5 51 50 57 44.5 69C40 79 38 90 24 93.6C13 95 6.5 88 5.8 79.5" fill="none" stroke="#ff5a67" stroke-width="2.8" stroke-linecap="butt"/><path d="M13.4 46.5C12.2 28 19 12.4 34 12.4C46 12.4 54.5 22 55 35.8" fill="none" stroke="#ff5a67" stroke-width="2.6"/><path d="M12.3 43.63A11.6 11.6 0 1 1 12.3 65.17L12.3 57.32A5.2 5.2 0 1 0 12.3 51.48z" fill="#ff5a67"/></g></svg>
</body></html>
